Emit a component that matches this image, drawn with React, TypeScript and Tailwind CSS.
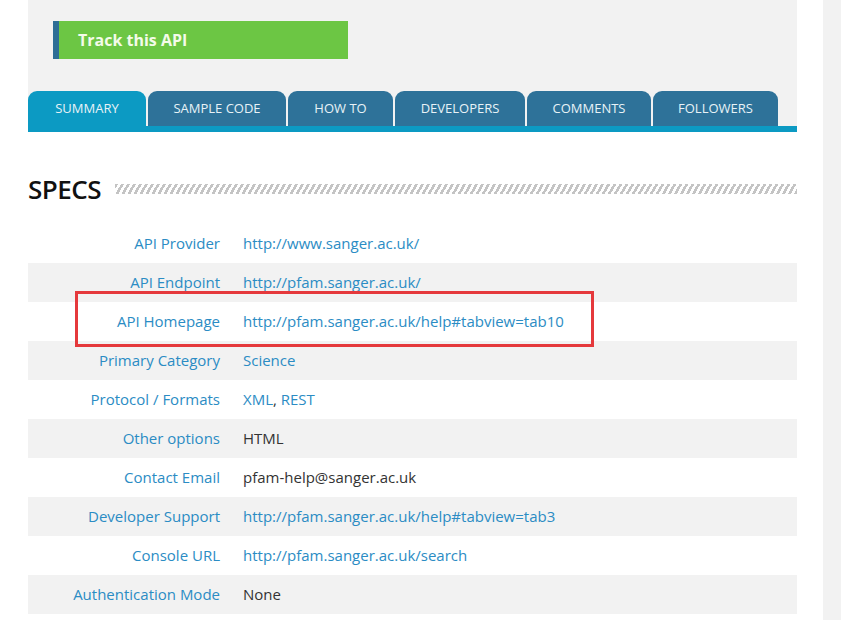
import React from "react";

const tabs = ["SUMMARY", "SAMPLE CODE", "HOW TO", "DEVELOPERS", "COMMENTS", "FOLLOWERS"];
const tabWidths = [118, 138, 105, 130, 124, 125];

type Row = { label: string; value: React.ReactNode };

const link = "text-[#2b8cc4]";

const rows: Row[] = [
  { label: "API Provider", value: <span className={link}>http://www.sanger.ac.uk/</span> },
  { label: "API Endpoint", value: <span className={link}>http://pfam.sanger.ac.uk/</span> },
  { label: "API Homepage", value: <span className={link}>http://pfam.sanger.ac.uk/help#tabview=tab10</span> },
  { label: "Primary Category", value: <span className={link}>Science</span> },
  {
    label: "Protocol / Formats",
    value: (
      <span>
        <span className={link}>XML</span>, <span className={link}>REST</span>
      </span>
    ),
  },
  { label: "Other options", value: <span>HTML</span> },
  { label: "Contact Email", value: <span>pfam-help@sanger.ac.uk</span> },
  { label: "Developer Support", value: <span className={link}>http://pfam.sanger.ac.uk/help#tabview=tab3</span> },
  { label: "Console URL", value: <span className={link}>http://pfam.sanger.ac.uk/search</span> },
  { label: "Authentication Mode", value: <span>None</span> },
];

export default function App() {
  return (
    <div
      className="relative flex h-[620px] w-[841px] overflow-hidden bg-white text-[#333]"
      style={{ fontFamily: '"Open Sans", "Noto Sans", sans-serif' }}
    >
      <div className="w-[28px] shrink-0" />
      <div className="flex w-[769px] shrink-0 flex-col">
        <div className="bg-[#f2f2f2] pt-[21px]">
          <div className="ml-[25px] flex h-[38px] w-[295px] items-center border-l-[6px] border-[#2d6e96] bg-[#6cc644] pl-[19px]">
            <span className="text-[16px] font-bold text-[#f4fbe9]">Track this API</span>
          </div>
          <div className="mt-[32px] flex h-[35px] items-end gap-[2px]">
            {tabs.map((t, i) => (
              <div
                key={t}
                className={`flex h-[35px] items-center justify-center rounded-t-[9px] text-[13px] text-[#e8f2f7] ${
                  i === 0 ? "bg-[#0c9ac3]" : "bg-[#2e7299]"
                }`}
                style={{ width: tabWidths[i] }}
              >
                {t}
              </div>
            ))}
          </div>
        </div>
        <div className="h-[6px] bg-[#0c9ac3]" />
        <div className="mt-[44px] flex items-center">
          <h2 className="text-[26px] font-semibold leading-none tracking-[-0.5px] text-[#111]">SPECS</h2>
          <div className="ml-[14px] h-[10px] flex-1 bg-[repeating-linear-gradient(120deg,#c4c4c4_0px,#c4c4c4_2.6px,#ffffff_2.6px,#ffffff_5.2px)]" />
        </div>
        <div className="mt-[22px] flex flex-col text-[15px]">
          {rows.map((r, i) => (
            <div key={r.label} className={`flex h-[39px] items-center ${i % 2 === 1 ? "bg-[#f2f2f2]" : "bg-white"}`}>
              <div className="w-[192px] shrink-0 text-right text-[#2b8cc4]">{r.label}</div>
              <div className="ml-[23px] text-[#333]">{r.value}</div>
            </div>
          ))}
        </div>
      </div>
      <div className="w-[26px] shrink-0" />
      <div className="flex-1 bg-[#f2f2f2]" />
      <div className="pointer-events-none absolute left-[75px] top-[291px] h-[56px] w-[519px] border-[3px] border-[#e5393c]" />
    </div>
  );
}
